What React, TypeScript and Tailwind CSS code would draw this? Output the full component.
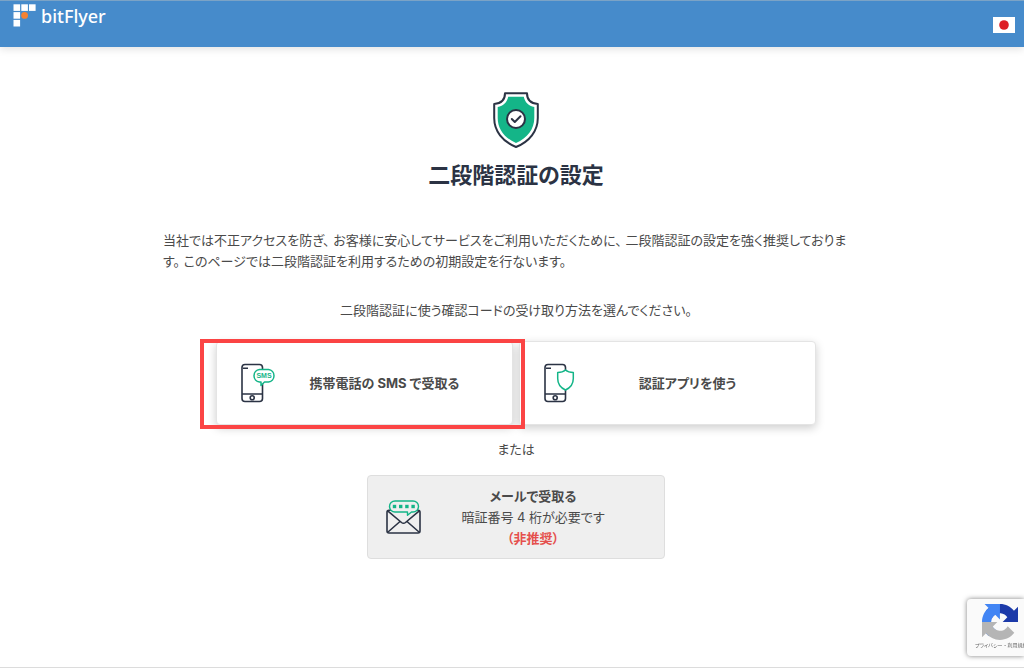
import type { ReactNode } from 'react';

const INK = '#2b3344';
const GREEN = '#14b588';

function BitFlyerLogo() {
  return (
    <a href="#" className="flex items-start gap-1 text-white">
      <svg width="24" height="24" viewBox="0 0 24 24" aria-hidden="true" className="mt-[3px]">
        <g fill="#ffffff">
          <rect x="0.5" y="0.3" width="6.6" height="6.6" />
          <rect x="8.3" y="0.3" width="6.6" height="6.6" />
          <rect x="16" y="0.3" width="6.6" height="6.6" />
          <rect x="0.5" y="8.1" width="6.6" height="6.6" />
          <rect x="0.5" y="15.9" width="6.6" height="6.6" />
        </g>
        <circle cx="11.6" cy="11.4" r="3.4" fill="#f58233" />
      </svg>
      <span className="font-['Noto_Sans'] text-[18px] leading-[30px] font-medium">bitFlyer</span>
    </a>
  );
}

function JapanFlag() {
  return (
    <svg width="22" height="16" viewBox="0 0 22 16" aria-hidden="true">
      <rect width="22" height="16" fill="#ffffff" />
      <circle cx="11" cy="8" r="4.8" fill="#dd1f26" />
    </svg>
  );
}

function ShieldCheck() {
  return (
    <svg width="48" height="58" viewBox="0 0 48 58" aria-hidden="true">
      <path
        d="M13 2.3H35C35 8.3 38.5 12.5 45.8 13V27C45.8 40 37.5 50.5 24 56C10.5 50.5 2.2 40 2.2 27V13C9.5 12.5 13 8.3 13 2.3Z"
        fill="#ffffff"
        stroke={INK}
        strokeWidth="2"
        strokeLinejoin="round"
      />
      <path
        d="M16.2 5.8H31.8C33 11.5 36.5 15 42.3 16V27C42.3 38 35.5 47 24 52C12.5 47 5.7 38 5.7 27V16C11.5 15 15 11.5 16.2 5.8Z"
        fill={GREEN}
      />
      <circle cx="24" cy="28" r="9" fill="#ffffff" stroke={INK} strokeWidth="2" />
      <path
        d="M19.8 28L22.8 31L28.5 25.3"
        fill="none"
        stroke={INK}
        strokeWidth="2"
        strokeLinecap="round"
        strokeLinejoin="round"
      />
    </svg>
  );
}

function PhoneBody() {
  return (
    <g fill="none" stroke={INK} strokeWidth="1.6">
      <rect x="1" y="1.5" width="20.5" height="37" rx="3" fill="#ffffff" />
      <path d="M1 31H21.5M2 5.2H7" />
      <circle cx="11.2" cy="34.8" r="2" />
    </g>
  );
}

function SmsIcon() {
  return (
    <svg width="36" height="40" viewBox="0 0 36 40" aria-hidden="true">
      <PhoneBody />
      <path
        d="M18.5 6.5H27.5A6.3 6.3 0 0 1 27.5 19H23.5L20 22.5V19H18.5A6.3 6.3 0 0 1 18.5 6.5Z"
        fill="#ffffff"
        stroke={GREEN}
        strokeWidth="1.5"
        strokeLinejoin="round"
      />
      <text
        x="23"
        y="15.3"
        textAnchor="middle"
        fill={GREEN}
        fontSize="7"
        fontWeight="700"
        fontFamily="'Liberation Sans', sans-serif"
      >
        SMS
      </text>
    </svg>
  );
}

function AppShieldIcon() {
  return (
    <svg width="36" height="40" viewBox="0 0 36 40" aria-hidden="true">
      <PhoneBody />
      <path
        d="M21.5 7C19.5 8.8 17 9.6 13.7 9.6V15.5C13.7 21 17 25 21.5 27C26 25 29.3 21 29.3 15.5V9.6C26.5 9.6 23.5 8.8 21.5 7Z"
        fill="#ffffff"
        stroke={GREEN}
        strokeWidth="1.5"
        strokeLinejoin="round"
      />
    </svg>
  );
}

function MailIcon() {
  return (
    <svg width="36" height="34" viewBox="0 0 36 34" aria-hidden="true">
      <g fill="none" strokeWidth="1.6" strokeLinejoin="round">
        <rect x="1" y="10.3" width="33" height="22.7" rx="2" stroke={INK} />
        <path d="M2 11.2L15.5 22.5Q17.5 24.1 19.5 22.5L33 11.2M2 32L14 21.5M33 32L21 21.5" stroke={INK} />
        <path
          d="M9 1H27A5.5 5.5 0 0 1 27 12H25.5L21.5 15.3V12H9A5.5 5.5 0 0 1 9 1Z"
          fill="#efefef"
          stroke={GREEN}
          strokeWidth="1.4"
        />
      </g>
      <g fill={GREEN}>
        <rect x="6.8" y="4.8" width="3.4" height="3.4" />
        <rect x="13" y="4.8" width="3.4" height="3.4" />
        <rect x="19.2" y="4.8" width="3.4" height="3.4" />
        <rect x="25.4" y="4.8" width="3.4" height="3.4" />
      </g>
    </svg>
  );
}

function RecaptchaLogo() {
  return (
    <svg width="36" height="36" viewBox="0 0 64 64" aria-hidden="true">
      <path
        d="M64 31.955a33 33 0 0 0-.024-1.377V4.687l-7.157 7.157C50.961 4.674 42.049.093 32.068.093c-10.387 0-19.615 4.96-25.45 12.64l11.73 11.854a15.54 15.54 0 0 1 4.754-5.334c2.05-1.6 4.952-2.906 8.968-2.906.485 0 .86.057 1.135.163 4.976.393 9.288 3.14 11.828 7.124l-8.304 8.304L64 31.89"
        fill="#1c3aa9"
      />
      <path
        d="M31.862.094a33 33 0 0 0-1.377.024H4.594l7.157 7.157C4.58 13.133 0 22.045 0 32.026c0 10.387 4.96 19.615 12.64 25.45l11.854-11.73a15.54 15.54 0 0 1-5.334-4.754c-1.6-2.05-2.906-4.952-2.906-8.968 0-.485.057-.86.163-1.135.393-4.976 3.14-9.288 7.124-11.828l8.304 8.304L31.957.1"
        fill="#4285f4"
      />
      <path
        d="M.001 32.028a33 33 0 0 0 .024 1.377v25.89l7.157-7.157c5.858 7.17 14.77 11.751 24.751 11.751 10.387 0 19.615-4.96 25.45-12.64l-11.73-11.854a15.54 15.54 0 0 1-4.754 5.334c-2.05 1.6-4.952 2.906-8.968 2.906-.485 0-.86-.057-1.135-.163-4.976-.393-9.288-3.14-11.828-7.124l8.304-8.304L.1 32.094"
        fill="#b5b5b5"
      />
    </svg>
  );
}

interface MethodButtonProps {
  icon: ReactNode;
  children: ReactNode;
}

function MethodButton({ icon, children }: MethodButtonProps) {
  return (
    <button
      type="button"
      className="flex h-[84px] w-full items-center rounded border border-[#e4e4e4] bg-white pr-5 pl-6 text-[13px] font-bold shadow-[0_3px_10px_rgba(0,0,0,0.2)]"
    >
      {icon}
      <span className="flex-1 text-center">{children}</span>
    </button>
  );
}

export default function App() {
  return (
    <div className="flex min-h-screen flex-col border-b border-[#dcdcdc] bg-white font-['Inter','Noto_Sans_CJK_JP',sans-serif] text-[13px] leading-[21px] text-[#4a4a4a] [font-feature-settings:'palt']">
      <header className="flex h-[47px] items-start justify-between border-t border-[#7ba3c6] bg-[#468bcb] pr-[9px] pl-[13px] shadow-[0_2px_8px_rgba(0,0,0,0.12)]">
        <BitFlyerLogo />
        <button type="button" aria-label="日本語" className="mt-4">
          <JapanFlag />
        </button>
      </header>

      <main className="flex flex-col items-center pt-11 pr-4 pl-6">
        <ShieldCheck />
        <h1 className="mt-2 text-[22px] leading-9 font-bold text-[#2b3344]">二段階認証の設定</h1>

        <p className="mt-[37px] w-full max-w-[706px] pr-4">
          当社では不正アクセスを防ぎ、 お客様に安心してサービスをご利用いただくために、 二段階認証の設定を強く推奨しております。 このページでは二段階認証を利用するための初期設定を行ないます。
        </p>
        <p className="mt-7">二段階認証に使う確認コードの受け取り方法を選んでください。</p>

        <div className="mt-5 grid w-full max-w-[600px] grid-cols-2 gap-[6px]">
          <div className="relative">
            <MethodButton icon={<SmsIcon />}>携帯電話の SMS で受取る</MethodButton>
            <div className="pointer-events-none absolute -top-[2px] -right-3 -bottom-1 -left-4 z-10 border-4 border-[#fb4444]" />
          </div>
          <MethodButton icon={<AppShieldIcon />}>認証アプリを使う</MethodButton>
        </div>

        <p className="mt-[14px]">または</p>

        <button
          type="button"
          className="mt-[15px] flex h-[84px] w-[298px] items-center rounded border border-[#dedede] bg-[#efefef] pr-5 pl-[18px]"
        >
          <MailIcon />
          <span className="flex flex-1 flex-col text-center">
            <strong className="font-bold">メールで受取る</strong>
            <span>暗証番号 4 桁が必要です</span>
            <strong className="font-bold text-[#e5504d]">（非推奨）</strong>
          </span>
        </button>
      </main>

      <aside className="fixed right-0 bottom-3 flex h-[57px] w-[57px] flex-col items-center rounded-l-sm bg-[#fafafa] pt-[5px] pl-2 shadow-[0_0_5px_rgba(0,0,0,0.5)]">
        <RecaptchaLogo />
        <a href="#" className="self-start text-[5px] leading-[10px] whitespace-nowrap text-[#666666]">
          プライバシー - 利用規約
        </a>
      </aside>
    </div>
  );
}
